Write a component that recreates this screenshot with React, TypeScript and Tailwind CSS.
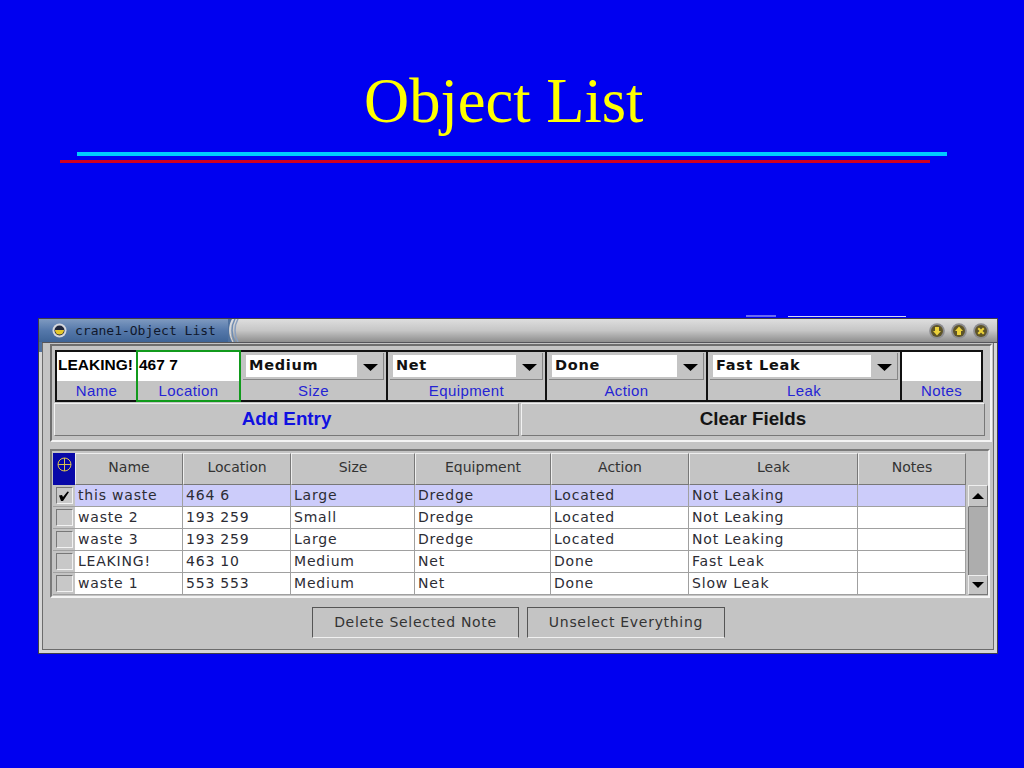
const FONT = "font-['DejaVu_Sans',sans-serif]";

const fields = [
  { label: "Name", value: "LEAKING!", width: "w-[81px]" },
  { label: "Location", value: "467 7", width: "w-[105px]", active: true },
  { label: "Size", value: "Medium", width: "w-[147px]", select: true, box: "w-[111px]" },
  { label: "Equipment", value: "Net", width: "w-[159px]", select: true, box: "w-[123px]" },
  { label: "Action", value: "Done", width: "w-[161px]", select: true, box: "w-[125px]" },
  { label: "Leak", value: "Fast Leak", width: "w-[194px]", select: true, box: "w-[158px]" },
  { label: "Notes", value: "", width: "w-[81px]" },
];

const columns = [
  { title: "Name", width: "w-[108px]" },
  { title: "Location", width: "w-[108px]" },
  { title: "Size", width: "w-[124px]" },
  { title: "Equipment", width: "w-[136px]" },
  { title: "Action", width: "w-[138px]" },
  { title: "Leak", width: "w-[169px]" },
  { title: "Notes", width: "w-[108px]" },
];

const rows = [
  ["this waste", "464 6", "Large", "Dredge", "Located", "Not Leaking", ""],
  ["waste 2", "193 259", "Small", "Dredge", "Located", "Not Leaking", ""],
  ["waste 3", "193 259", "Large", "Dredge", "Located", "Not Leaking", ""],
  ["LEAKING!", "463 10", "Medium", "Net", "Done", "Fast Leak", ""],
  ["waste 1", "553 553", "Medium", "Net", "Done", "Slow Leak", ""],
];

function TitleButton({ d }: { d: string }) {
  return (
    <svg width="16" height="16" viewBox="0 0 16 16">
      <circle cx="8" cy="8" r="7.8" fill="#8c8c90" />
      <circle cx="8" cy="8" r="6" fill="#5e5428" />
      <path d={d} fill="#ecd23a" />
    </svg>
  );
}

function Arrow() {
  return (
    <svg width="15" height="7" viewBox="0 0 15 7">
      <path d="M0 0 L15 0 L7.5 7 Z" fill="#000" />
    </svg>
  );
}

function SmallArrow({ up = false }: { up?: boolean }) {
  return (
    <svg width="12" height="6" viewBox="0 0 12 6">
      <path d={up ? "M6 0 L12 6 L0 6 Z" : "M0 0 L12 0 L6 6 Z"} fill="#000" />
    </svg>
  );
}

export default function App() {
  return (
    <div className={`w-[1024px] h-[768px] bg-[#0000f0] overflow-hidden flex flex-col ${FONT}`}>
      {/* Slide heading */}
      <h1 className="h-[152px] pt-[66px] pl-[364px] text-[62.5px] leading-[70px] text-[#ffff00] font-['Liberation_Serif',serif]">
        Object List
      </h1>
      <div className="ml-[77px] w-[870px] h-[4px] bg-[#00ccff]" />
      <div className="ml-[60px] mt-[4px] w-[870px] h-[3px] bg-[#d0001c]" />

      {/* Window */}
      <div className="relative ml-[38px] mt-[155px] w-[960px] h-[336px] bg-[#d6d6d6] border border-[#3f3f4a] flex flex-col">
        {/* bit of another window poking out behind this one */}
        <div className="absolute left-[749px] -top-[3px] w-[118px] h-px bg-[#d4d8f4]" />
        <div className="absolute left-[707px] -top-[4px] w-[30px] h-[2px] bg-[#6a6af0]" />
        {/* title bar colour runs down the left edge */}
        <div className="absolute left-0 top-[23px] w-[3px] h-[10px] bg-[#4f719f]" />

        {/* Title bar */}
        <div className="h-[24px] shrink-0 flex bg-gradient-to-b from-[#dedede] via-[#c6c6c6] to-[#8e8e8e] border-b border-[#55555a]">
          <div className="w-[189px] flex items-center gap-[8px] pl-[13px] bg-gradient-to-b from-[#7f9ac0] via-[#5578aa] to-[#3f6496]">
            <svg width="15" height="15" viewBox="0 0 15 15">
              <circle cx="7.5" cy="7.5" r="7" fill="#d5d8de" />
              <circle cx="7.5" cy="7.5" r="5" fill="#20263a" />
              <path d="M3 7 H12 A4.5 4.5 0 0 1 3 7 Z" fill="#e4c82c" />
            </svg>
            <span className="pt-px font-['DejaVu_Sans_Mono',monospace] text-[13px] text-[#10182c] whitespace-nowrap">
              crane1-Object List
            </span>
          </div>
          <svg width="14" height="23" viewBox="0 0 14 23" fill="none">
            <path d="M4 0 C0 7 0 16 4 23 H0 V0 Z" fill="#4f719f" />
            <path d="M5 0 C1 7 1 16 5 23" stroke="#d8dde6" strokeWidth="1" />
            <path d="M7 0 C3 7 3 16 7 23" stroke="#6f8db4" strokeWidth="1.5" />
            <path d="M10 0 C6 7 6 16 10 23" stroke="#8aa0c0" strokeWidth="1.5" />
          </svg>
          <div className="ml-auto mr-[8px] flex items-center gap-[6px]">
            <TitleButton d="M6 4 H10 V8 H12 L8 12.5 L4 8 H6 Z" />
            <TitleButton d="M8 3.5 L12 8 H10 V12 H6 V8 H4 Z" />
            <TitleButton d="M4.5 6 L6 4.5 L8 6.5 L10 4.5 L11.5 6 L9.5 8 L11.5 10 L10 11.5 L8 9.5 L6 11.5 L4.5 10 L6.5 8 Z" />
          </div>
        </div>

        {/* Window body, with the inner dark line of the frame */}
        <div className="flex-1 mx-[3px] mb-[3px] bg-[#c4c4c4] border border-t-0 border-[#6c6c6c] flex flex-col">
          {/* Entry panel */}
          <div className="mt-px ml-[7px] w-[942px] h-[98px] border-2 border-[#6e6e6e] border-r-[#f4f4f4] border-b-[#f4f4f4] pt-[4px] pl-[3px]">
            <div className="flex w-[928px] h-[52px] border-y-2 border-l-2 border-[#111]">
              {fields.map((field) => (
                <div
                  key={field.label}
                  className={`${field.width} relative flex flex-col border-r-2 ${
                    field.active ? "border-2 border-[#119a1c] -my-[2px] -ml-[2px] z-10" : "border-[#111]"
                  }`}
                >
                  {field.select ? (
                    <div className="h-[29px] shrink-0 pt-[1px]">
                      <div className="h-[27px] ml-[2px] mr-[2px] pt-[2px] pl-[3px] flex border-r border-b border-[#868686]">
                        <div className={`${field.box} h-[22px] bg-white pl-[3px] flex items-center`}>
                          <span className="text-[14.5px] font-bold tracking-[0.7px] text-[#111]">{field.value}</span>
                        </div>
                        <div className="flex-1 flex items-center justify-center">
                          <Arrow />
                        </div>
                      </div>
                    </div>
                  ) : (
                    <div className="h-[29px] shrink-0 bg-white flex items-center pl-px pb-[3px]">
                      <span className="text-[15.5px] font-bold text-black font-['Liberation_Sans',sans-serif] whitespace-nowrap">
                        {field.value}
                      </span>
                    </div>
                  )}
                  <div className="flex-1 flex items-center justify-center pb-px text-[15px] leading-[17px] text-[#2424d4] font-['Liberation_Sans',sans-serif] tracking-[0.4px]">
                    {field.label}
                  </div>
                </div>
              ))}
            </div>
            <div className="mt-px -ml-px flex gap-[2px] font-['Liberation_Sans',sans-serif] font-bold text-[18.8px]">
              <div className="w-[465px] h-[33px] flex items-center justify-center text-[#1010e0] border border-[#f2f2f2] border-r-[#777] border-b-[#777]">
                Add Entry
              </div>
              <div className="w-[464px] h-[33px] flex items-center justify-center text-[#141414] border border-[#f2f2f2] border-r-[#777] border-b-[#777]">
                Clear Fields
              </div>
            </div>
          </div>

          {/* Table panel */}
          <div className="mt-[7px] ml-[7px] w-[940px] h-[149px] border-2 border-[#7a7a7a] border-r-[#f4f4f4] border-b-[#f4f4f4] pt-[2px] pl-[1px]">
            <div className="flex h-[32px]">
              <div className="w-[22px] bg-[#0808a8] flex justify-center pt-[4px]">
                <svg width="15" height="15" viewBox="0 0 15 15" fill="none" stroke="#d8c050" strokeWidth="1">
                  <circle cx="7.5" cy="7.5" r="6.5" />
                  <path d="M1 7.5 H14 M7.5 1 V14" />
                </svg>
              </div>
              {columns.map((col) => (
                <div
                  key={col.title}
                  className={`${col.width} flex items-center justify-center text-[14px] text-[#333] border border-[#eeeeee] border-r-[#777] border-b-[#777] pb-[3px]`}
                >
                  {col.title}
                </div>
              ))}
            </div>
            <div className="flex">
              <div className="w-[913px] flex flex-col">
                {rows.map((row, i) => (
                  <div key={i} className={`flex h-[22px] border-b border-[#a0a0a0] ${i === 0 ? "bg-[#ccccfa]" : "bg-white"}`}>
                    <div className="w-[22px] bg-[#c4c4c4] flex items-center justify-center">
                      <div className="w-[17px] h-[17px] bg-[#c8c8c8] border border-[#777] border-r-[#f2f2f2] border-b-[#f2f2f2] flex items-center justify-center">
                        {i === 0 && (
                          <svg width="12" height="12" viewBox="0 0 12 12">
                            <path d="M1 5.5 L4 5 L5 7 L9.5 1.5 L11 2 L5 11 L3 11 Z" fill="#000" />
                          </svg>
                        )}
                      </div>
                    </div>
                    {row.map((cell, j) => (
                      <div
                        key={j}
                        className={`${columns[j].width} border-r border-[#a0a0a0] pl-[3px] text-[14px] leading-[21px] tracking-[0.8px] text-[#2c2c34] whitespace-nowrap`}
                      >
                        {cell}
                      </div>
                    ))}
                  </div>
                ))}
              </div>
              <div className="w-[20px] ml-[2px] flex flex-col">
                <div className="h-[22px] flex items-center justify-center border border-[#eeeeee] border-r-[#777] border-b-[#777]">
                  <SmallArrow up />
                </div>
                <div className="flex-1 bg-[#adadad] border-l border-[#777]" />
                <div className="h-[20px] flex items-center justify-center border border-[#eeeeee] border-r-[#777] border-b-[#777]">
                  <SmallArrow />
                </div>
              </div>
            </div>
          </div>

          {/* Bottom buttons */}
          <div className="mt-[9px] pl-[269px] flex gap-[8px] text-[14px] text-[#333] tracking-[0.7px]">
            <div className="w-[207px] h-[31px] flex items-center justify-center border border-[#555] border-b-[#f0f0f0]">
              Delete Selected Note
            </div>
            <div className="w-[198px] h-[31px] flex items-center justify-center border border-[#555] border-b-[#f0f0f0]">
              Unselect Everything
            </div>
          </div>
        </div>
      </div>
    </div>
  );
}
